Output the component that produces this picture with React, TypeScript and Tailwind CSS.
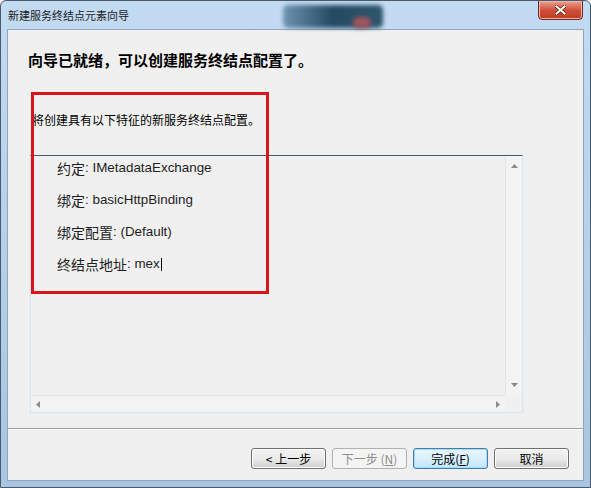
import React from 'react'

const ui = { fontFamily: '"Liberation Sans", "Noto Sans CJK SC", sans-serif' }

function WinButton({
  children,
  disabled = false,
  primary = false,
}: {
  children: React.ReactNode
  disabled?: boolean
  primary?: boolean
}) {
  const base = 'flex h-[21px] w-[75px] items-center justify-center rounded-[3px] border text-[12px] leading-none'
  const look = disabled
    ? 'border-[#adb2b5] bg-[#f4f4f4] text-[#8d8d8d]'
    : primary
      ? 'border-[#3c7fb1] bg-gradient-to-b from-[#eaf6fd] via-[#d9f0fc] to-[#bee6fd] text-black shadow-[inset_0_0_0_1px_#a9dbf6]'
      : 'border-[#707070] bg-gradient-to-b from-[#f2f2f2] via-[#ebebeb] to-[#cfcfcf] text-black shadow-[inset_0_0_0_1px_#fcfcfc]'
  return <div className={`${base} ${look}`}>{children}</div>
}

function Arrow({ dir }: { dir: 'up' | 'down' | 'left' | 'right' }) {
  const pts = {
    up: '0,4 3.5,0 7,4',
    down: '0,0 3.5,4 7,0',
    left: '4,0 0,3.5 4,7',
    right: '0,0 4,3.5 0,7',
  }[dir]
  const vert = dir === 'up' || dir === 'down'
  return (
    <svg width={vert ? 7 : 4} height={vert ? 4 : 7} className="block">
      <polygon points={pts} fill="#8a8a8a" />
    </svg>
  )
}

function Row({ label, value, caret = false }: { label: string; value: string; caret?: boolean }) {
  return (
    <div className="flex h-[20px] items-center whitespace-nowrap">
      <span className="text-[14px] text-[#1e1e1e]" style={{ fontFamily: '"Noto Sans CJK SC", sans-serif' }}>
        {label}
      </span>
      <span className="text-[13.4px] text-[#1e1e1e]">: {value}</span>
      {caret && <span className="ml-[1px] h-[13px] w-px bg-black" />}
    </div>
  )
}

export default function App() {
  return (
    <div
      className="relative flex h-[488px] w-[591px] flex-col overflow-hidden rounded-t-[6px] border border-[#4b5a6a] bg-gradient-to-b from-[#c3dbf2] to-[#a9c5e2]"
      style={ui}
    >
      {/* title bar */}
      <div className="relative flex h-[28px] shrink-0 items-center pl-[7px]">
        <div className="absolute left-[282px] top-[4px] h-[23px] w-[100px] rounded-[5px] bg-gradient-to-r from-[#6f94b4] via-[#244a62] to-[#2f566c] blur-[2px]" />
        <div className="absolute left-[352px] top-[16px] h-[11px] w-[18px] rounded-full bg-[#a2535c] blur-[2px]" />
        <span className="relative text-[11px] text-[#1b1b1b]" style={{ fontFamily: '"Noto Sans CJK SC", sans-serif' }}>
          新建服务终结点元素向导
        </span>
        <div className="absolute right-[7px] top-[-1px] flex h-[20px] w-[45px] items-center justify-center rounded-b-[4px] border border-[#6b2a22] bg-gradient-to-b from-[#e8a393] via-[#d1503a] to-[#c1381f] shadow-[inset_0_0_0_1px_#efb4a6]">
          <svg width="11" height="10" viewBox="0 0 11 10">
            <path d="M1.5 1.5 L9.5 8.5 M9.5 1.5 L1.5 8.5" stroke="#5a1a10" strokeWidth="3.4" strokeLinecap="square" />
            <path d="M1.5 1.5 L9.5 8.5 M9.5 1.5 L1.5 8.5" stroke="#ffffff" strokeWidth="2" strokeLinecap="square" />
          </svg>
        </div>
      </div>

      {/* client area */}
      <div className="mx-[6px] mb-[6px] flex flex-1 flex-col border border-[#8fa6bd] bg-[#f0f0f0]">
        <div className="flex flex-1 flex-col">
          <h1
            className="ml-[20px] mt-[20px] h-[20px] text-[15px] font-bold leading-[20px] text-black"
            style={{ fontFamily: '"Noto Sans CJK SC", sans-serif' }}
          >
            向导已就绪，可以创建服务终结点配置了。
          </h1>
          <p
            className="ml-[24px] mt-[42px] h-[16px] text-[12px] leading-[16px] text-black"
            style={{ fontFamily: '"Noto Sans CJK SC", sans-serif' }}
          >
            将创建具有以下特征的新服务终结点配置。
          </p>

          {/* read-only text box */}
          <div className="ml-[22px] mt-[27px] flex h-[258px] w-[493px] flex-col border border-[#dce6ee] border-t-[#4d5a66] bg-[#f0f0f0] shadow-[0_0_0_1px_#e6eff5]">
            <div className="flex flex-1">
              <div className="flex flex-1 flex-col gap-[12px] pl-[26px] pt-[2px]">
                <Row label="约定" value="IMetadataExchange" />
                <Row label="绑定" value="basicHttpBinding" />
                <Row label="绑定配置" value="(Default)" />
                <Row label="终结点地址" value="mex" caret />
              </div>
              <div className="flex w-[17px] flex-col items-center justify-between border-l border-[#e4e4e4] bg-[#f3f3f3] py-[8px]">
                <Arrow dir="up" />
                <Arrow dir="down" />
              </div>
            </div>
            <div className="flex h-[17px]">
              <div className="flex flex-1 items-center justify-between border-t border-[#e4e4e4] bg-[#f3f3f3] px-[5px]">
                <Arrow dir="left" />
                <Arrow dir="right" />
              </div>
              <div className="w-[17px] bg-[#f0f0f0]" />
            </div>
          </div>
        </div>

        {/* footer */}
        <div className="h-[52px] shrink-0 border-t border-[#a0a0a0] shadow-[inset_0_1px_0_#ffffff]">
          <div
            className="flex justify-end gap-[6px] pr-[14px] pt-[19px]"
            style={{ fontFamily: '"Noto Sans CJK SC", sans-serif' }}
          >
            <WinButton>&lt; 上一步</WinButton>
            <WinButton disabled>
              下一步 (<span className="underline">N</span>)
            </WinButton>
            <WinButton primary>
              完成(<span className="underline">F</span>)
            </WinButton>
            <WinButton>取消</WinButton>
          </div>
        </div>
      </div>

      {/* red annotation box */}
      <div className="pointer-events-none absolute left-[30px] top-[91px] h-[202px] w-[238px] border-[3px] border-[#d9141b]" />
    </div>
  )
}
